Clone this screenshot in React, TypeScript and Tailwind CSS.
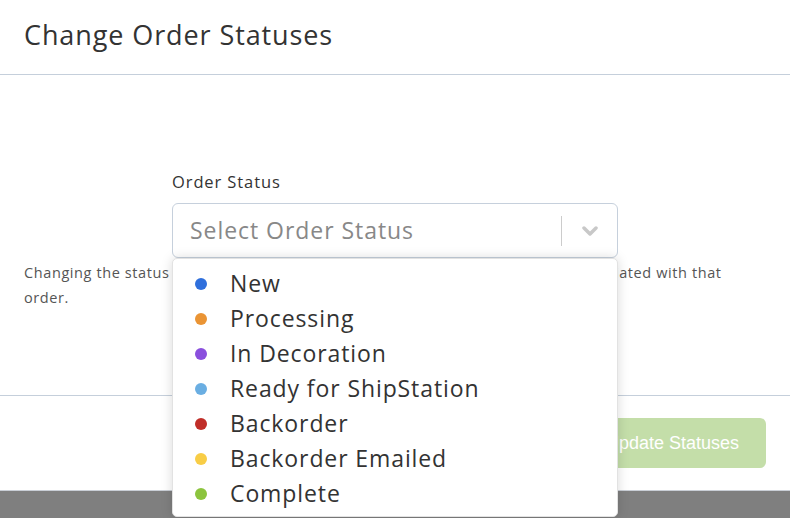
import React from "react";

const statuses = [
  { name: "New", color: "bg-[#2f6fdc]" },
  { name: "Processing", color: "bg-[#ea9434]" },
  { name: "In Decoration", color: "bg-[#8a4fdd]" },
  { name: "Ready for ShipStation", color: "bg-[#6aaee2]" },
  { name: "Backorder", color: "bg-[#c02e28]" },
  { name: "Backorder Emailed", color: "bg-[#f8cd46]" },
  { name: "Complete", color: "bg-[#8cc43e]" },
];

export default function App() {
  return (
    <div
      className="relative w-[790px] h-[518px] overflow-hidden bg-[#7f7f7f]"
      style={{ fontFamily: "'Open Sans', 'Noto Sans', sans-serif" }}
    >
      <div className="flex h-[491px] flex-col border-b border-[#c9ced6] bg-white">
        <div className="flex h-[75px] items-center border-b border-[#c5cfdb] px-6 pb-[3px]">
          <h1 className="text-[27px] tracking-[0.9px] text-[#333]">Change Order Statuses</h1>
        </div>
        <div className="h-[320px] pt-[95px]">
          <div className="mx-auto w-[446px]">
            <div className="text-[16.5px] leading-6 tracking-[0.9px] text-[#333]">Order Status</div>
            <div className="mt-[9px] flex h-[55px] items-center rounded-md border border-[#c6d0dc] bg-white">
              <span className="flex-1 pl-[17px] text-[23px] tracking-[0.95px] text-[#888]">Select Order Status</span>
              <span className="h-[30px] w-px bg-[#ccc]" />
              <span className="flex w-[55px] items-center justify-center">
                <svg width="16" height="10" viewBox="0 0 16 10">
                  <path d="M2 2 L8 8 L14 2" stroke="#c8c8c8" strokeWidth="3.5" fill="none" strokeLinecap="round" strokeLinejoin="round" />
                </svg>
              </span>
            </div>
          </div>
          <p className="mt-[2px] px-6 text-[14.5px] leading-[25px] tracking-[0.6px] text-[#555]">
            Changing the status of an order will also change the status of all line items associated with that
            <br />
            order.
          </p>
        </div>
        <div className="flex flex-1 justify-end border-t border-[#c5cfdb] px-6 pt-[22px]">
          <button
            className="h-[50px] rounded-md bg-[#c4dea9] px-[27px] text-[18px] text-white"
            style={{ fontFamily: "'Liberation Sans', Arial, sans-serif" }}
          >
            Update Statuses
          </button>
        </div>
      </div>
      <div className="absolute left-[172px] top-[258px] h-[259px] w-[446px] rounded-[5px] bg-white pt-[7px] shadow-[0_0_12px_rgba(0,0,0,0.15)] border border-[#e2e2e2]">
        {statuses.map((s) => (
          <div key={s.name} className="flex h-[35px] items-center">
            <span className={`ml-[22px] h-3 w-3 rounded-full ${s.color}`} />
            <span className="ml-[23px] text-[23px] tracking-[0.9px] text-[#333]">{s.name}</span>
          </div>
        ))}
      </div>
    </div>
  );
}
